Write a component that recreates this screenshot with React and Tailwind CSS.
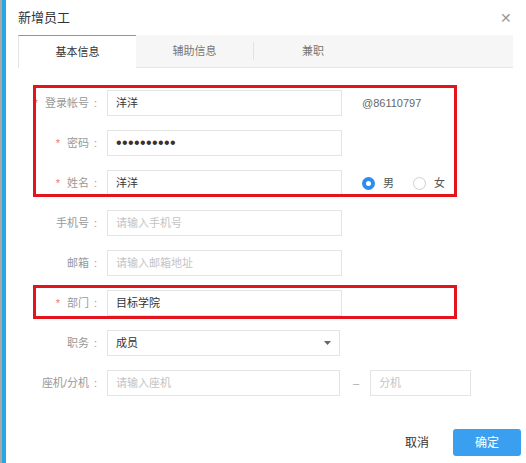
import React from "react";

const FONT = { fontFamily: '"Liberation Sans", "Noto Sans CJK SC", sans-serif' };

function Label({ text, required }) {
  return (
    <div className="w-[89px] shrink-0 flex items-center justify-end pr-[10px] text-[11px] text-[#999]">
      {required && <span className="text-[#e77] mr-[7px] text-[11px] leading-none">*</span>}
      <span>{text}</span>
      <span className="ml-[5px]">:</span>
    </div>
  );
}

function Box({ children, className = "" }) {
  return (
    <div className={"h-[26px] border border-[#e4e4e4] bg-white flex items-center pl-[8px] text-[11px] " + className}>
      {children}
    </div>
  );
}

function Row({ label, required, children }) {
  return (
    <div className="flex items-center h-[26px]">
      <Label text={label} required={required} />
      {children}
    </div>
  );
}

export default function App() {
  return (
    <div className="w-[526px] h-[463px] flex bg-white overflow-hidden relative" style={FONT}>
      <div className="w-[2px] shrink-0 bg-[#a9a9a9]" />
      <div className="w-[4px] shrink-0 bg-[#27a8e0]" />
      <div className="flex-1 flex flex-col pl-[12px] pr-[5px]">
        {/* header */}
        <div className="h-[35px] flex items-center justify-between">
          <span className="text-[13px] text-[#333]">新增员工</span>
          <span className="mr-[9px] text-[14px] text-[#999] leading-none">✕</span>
        </div>
        {/* tabs */}
        <div className="h-[33px] mr-[8px] flex bg-[#f6f6f6] border-b border-[#e6e6e6]">
          <div className="w-[118px] h-[33px] bg-white border-t border-t-[#6a9fcf] border-l border-l-[#e4e4e4] flex items-center justify-center text-[11px] text-[#333]">
            基本信息
          </div>
          <div className="w-[118px] flex items-center justify-center text-[11px] text-[#777] border-r border-[#e2e2e2] my-[7px]">
            辅助信息
          </div>
          <div className="w-[118px] flex items-center justify-center text-[11px] text-[#777]">
            兼职
          </div>
        </div>
        {/* form */}
        <div className="mt-[22px] flex flex-col gap-[14px]">
          <Row label="登录帐号" required>
            <Box className="w-[235px] text-[#333]">洋洋</Box>
            <span className="ml-[20px] text-[11px] text-[#666]">@86110797</span>
          </Row>
          <Row label="密码" required>
            <Box className="w-[235px] text-[#333]">
              <span className="text-[16px] tracking-[0.4px] leading-none">••••••••••</span>
            </Box>
          </Row>
          <Row label="姓名" required>
            <Box className="w-[235px] text-[#333]">洋洋</Box>
            <div className="ml-[20px] flex items-center text-[11px] text-[#555]">
              <span className="w-[13px] h-[13px] rounded-full bg-[#2d8cf0] flex items-center justify-center">
                <span className="w-[5px] h-[5px] rounded-full bg-white" />
              </span>
              <span className="ml-[8px]">男</span>
              <span className="ml-[19px] w-[13px] h-[13px] rounded-full border border-[#cfcfcf] bg-white" />
              <span className="ml-[8px]">女</span>
            </div>
          </Row>
          <Row label="手机号">
            <Box className="w-[235px] text-[#c4c4c4]">请输入手机号</Box>
          </Row>
          <Row label="邮箱">
            <Box className="w-[235px] text-[#c4c4c4]">请输入邮箱地址</Box>
          </Row>
          <Row label="部门" required>
            <Box className="w-[235px] text-[#333]">目标学院</Box>
          </Row>
          <Row label="职务">
            <Box className="w-[233px] text-[#333] justify-between pr-[8px]">
              <span>成员</span>
              <svg width="7" height="4" viewBox="0 0 7 4">
                <path d="M0 0 L7 0 L3.5 4 Z" fill="#666" />
              </svg>
            </Box>
          </Row>
          <Row label="座机/分机">
            <Box className="w-[233px] text-[#c4c4c4]">请输入座机</Box>
            <span className="ml-[13px] text-[11px] text-[#aaa]">–</span>
            <Box className="ml-[11px] w-[101px] text-[#c4c4c4]">分机</Box>
          </Row>
        </div>
        {/* footer */}
        <div className="mt-[33px] flex justify-end items-center gap-[24px]">
          <span className="text-[12px] text-[#333]">取消</span>
          <div className="w-[68px] h-[27px] rounded-[3px] bg-[#3b9ff0] flex items-center justify-center text-[12px] text-white">
            确定
          </div>
        </div>
      </div>
      {/* annotation boxes */}
      <div className="absolute left-[33px] top-[85px] w-[424px] h-[112px] border-[3px] border-[#e4141c] pointer-events-none" />
      <div className="absolute left-[33px] top-[285px] w-[424px] h-[34px] border-[3px] border-[#e4141c] pointer-events-none" />
    </div>
  );
}
